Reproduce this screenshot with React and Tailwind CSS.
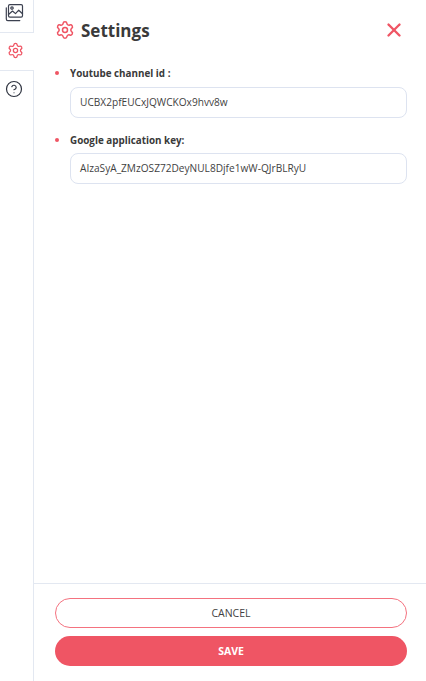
import React from "react";
import { Settings, HelpCircle, X } from "lucide-react";

function Field({ label, value, inputClass }) {
  return (
    <div>
      <div className="flex items-center h-[20px]">
        <span className="w-[4px] h-[4px] rounded-full bg-[#ef5564] mr-[11px]" />
        <span className="text-[9.85px] font-bold text-[#3a3a3a]">{label}</span>
      </div>
      <div className={`${inputClass} ml-[15px] h-[31px] pt-[1px] flex items-center rounded-[8px] border border-[#dde3f0] pl-[9px] text-[10.15px] text-[#3f3f3f]`}>
        {value}
      </div>
    </div>
  );
}

function StackedImage() {
  return (
    <svg width="20" height="20" viewBox="0 0 20 20" fill="none" stroke="#3c4150" strokeWidth="1.2" strokeLinecap="round" strokeLinejoin="round">
      <rect x="4.5" y="1.6" width="14" height="12.6" rx="1.4" />
      <path d="M4.5 11.5l4-3.5 3 2.6 3.2-3.4 3.8 3.6" />
      <circle cx="8" cy="5" r="1.2" />
      <path d="M2.3 4.8v11.2c0 .9.6 1.6 1.5 1.6h12" />
    </svg>
  );
}

export default function App() {
  return (
    <div className="flex w-[426px] h-[681px] bg-white overflow-hidden" style={{ fontFamily: '"Open Sans", sans-serif' }}>
      <div className="w-[34px] flex flex-col shrink-0">
        <div className="h-[33px] border-r border-b border-[#e3e8f1] flex items-center justify-center pr-[5px] pb-[6px]">
          <StackedImage />
        </div>
        <div className="h-[37px] flex items-center justify-center pr-[4px] pb-[3px]">
          <Settings size={17} strokeWidth={1.8} className="text-[#ef5564]" />
        </div>
        <div className="flex-1 border-t border-r border-[#e3e8f1] flex justify-center pt-[9px] pr-[5px]">
          <HelpCircle size={18} strokeWidth={1.6} className="text-[#2f3440]" />
        </div>
      </div>
      <div className="flex-1 flex flex-col">
        <div className="flex-1 pl-[21px] pr-[19px]">
          <div className="flex items-center justify-between h-[60px]">
            <div className="flex items-center gap-[6px]">
              <Settings size={20} strokeWidth={1.8} className="text-[#ef5564]" />
              <span className="text-[17px] font-bold text-[#3a3a3a] pt-[1px]">Settings</span>
            </div>
            <X size={22} strokeWidth={2.6} className="text-[#ef5564] mr-[2px]" />
          </div>
          <div className="flex flex-col gap-[12px] mt-[3px]">
            <Field inputClass="mt-[4px]" label="Youtube channel id :" value="UCBX2pfEUCxJQWCKOx9hvv8w" />
            <Field inputClass="mt-[3px]" label="Google application key:" value="AIzaSyA_ZMzOSZ72DeyNUL8Djfe1wW-QJrBLRyU" />
          </div>
        </div>
        <div className="h-[98px] border-t border-[#e3e8f1] pl-[21px] pr-[19px] pt-[14px] flex flex-col gap-[8px]">
          <button className="h-[30px] pt-[1px] rounded-full border border-[#f4727f] bg-white text-[10.5px] text-[#3f3f3f]">CANCEL</button>
          <button className="h-[30px] pt-[1px] rounded-full bg-[#ef5564] text-[10.5px] font-bold text-white">SAVE</button>
        </div>
      </div>
    </div>
  );
}
